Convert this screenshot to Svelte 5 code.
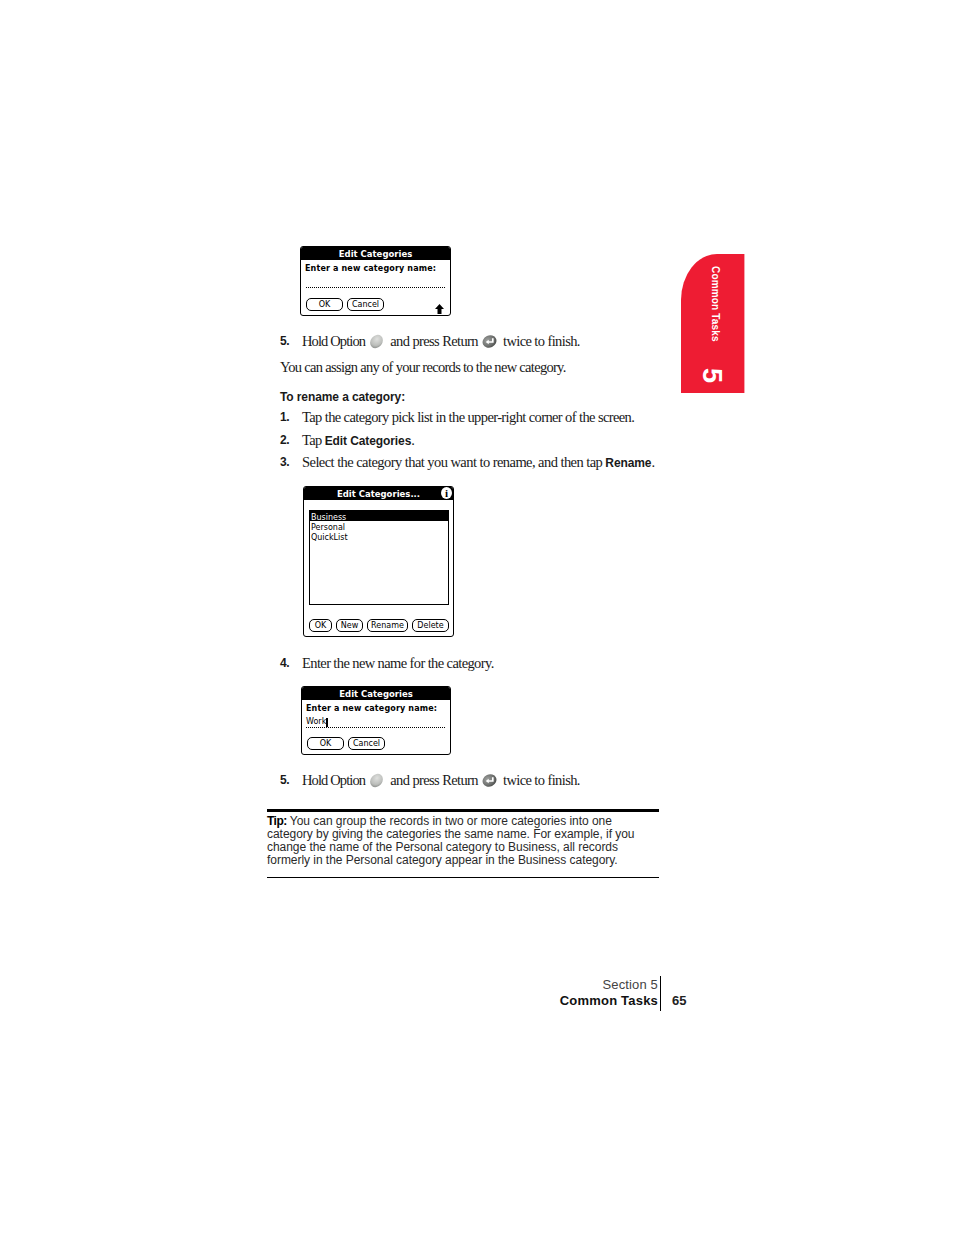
<script>
  const optionIcon = "option";
  const returnIcon = "return";
</script>

{#snippet hardKey(kind)}
  <svg class="key" viewBox="0 0 16 16" aria-hidden="true">
    <defs>
      <radialGradient id="{kind}-fill" cx="0.4" cy="0.35" r="0.8">
        {#if kind === optionIcon}
          <stop offset="0" stop-color="#dfe0de" />
          <stop offset="0.6" stop-color="#bcbebb" />
          <stop offset="1" stop-color="#777a77" />
        {:else}
          <stop offset="0" stop-color="#a0a2a0" />
          <stop offset="0.6" stop-color="#6c6e6c" />
          <stop offset="1" stop-color="#343634" />
        {/if}
      </radialGradient>
    </defs>
    {#if kind === optionIcon}
      <ellipse cx="8" cy="8" rx="6.2" ry="7.6" transform="rotate(40 8 8)" fill="url(#{kind}-fill)" />
    {:else}
      <ellipse cx="8" cy="8" rx="7.6" ry="6.4" transform="rotate(-25 8 8)" fill="url(#{kind}-fill)" />
      <path d="M11.5 4.5v4h-5" fill="none" stroke="#fff" stroke-width="1.8" />
      <path d="M7.2 6L4 8.6l3.2 2.4z" fill="#fff" />
    {/if}
  </svg>
{/snippet}

{#snippet finishStep()}
  <div class="step">
    <b class="num">5.</b>
    <span><span class="hold">Hold Option</span> <span class="gap-l">{@render hardKey(optionIcon)}</span> and press Return <span class="gap-l">{@render hardKey(returnIcon)}</span> twice to finish.</span>
  </div>
{/snippet}

<div class="page">
  <div class="sheet">
    <main class="column">
      <section class="palm first">
        <header class="bar">Edit Categories</header>
        <div class="prompt">Enter a new category name:</div>
        <div class="entry"></div>
        <div class="actions">
          <span class="btn ok">OK</span>
          <span class="btn cancel">Cancel</span>
          <svg class="up" viewBox="0 0 9 10" aria-hidden="true"><path d="M4.5 0L9 5H6.5v5h-4V5H0z" fill="#000" /></svg>
        </div>
      </section>

      <div class="mt15">{@render finishStep()}</div>
      <p class="body mt6">You can assign any of your records to the new category.</p>

      <h2 class="heading">To rename a category:</h2>
      <div class="step mt2"><b class="num">1.</b><span>Tap the category pick list in the upper-right corner of the screen.</span></div>
      <div class="step mt3"><b class="num">2.</b><span>Tap <b class="strong">Edit Categories</b>.</span></div>
      <div class="step mt2 loose"><b class="num">3.</b><span>Select the category that you want to rename, and then tap <b class="strong">Rename</b>.</span></div>

      <section class="palm second">
        <header class="bar">Edit Categories...
          <span class="info">i</span>
        </header>
        <div class="list">
          <div class="item active">Business</div>
          <div class="item">Personal</div>
          <div class="item">QuickList</div>
        </div>
        <div class="actions tight">
          <span class="btn b-ok">OK</span>
          <span class="btn b-new">New</span>
          <span class="btn b-rename">Rename</span>
          <span class="btn b-delete">Delete</span>
        </div>
      </section>

      <div class="step mt16"><b class="num">4.</b><span>Enter the new name for the category.</span></div>

      <section class="palm third">
        <header class="bar">Edit Categories</header>
        <div class="prompt">Enter a new category name:</div>
        <div class="entry filled"><span class="typed">Work</span><i class="caret"></i></div>
        <div class="actions">
          <span class="btn ok">OK</span>
          <span class="btn cancel">Cancel</span>
        </div>
      </section>

      <div class="mt15">{@render finishStep()}</div>

      <aside class="tip">
        <b>Tip:</b> You can group the records in two or more categories into one<br />
        category by giving the categories the same name. For example, if you<br />
        change the name of the Personal category to Business, all records<br />
        formerly in the Personal category appear in the Business category.
      </aside>
    </main>

    <div class="tab">
      <span class="tab-title">Common Tasks</span>
      <span class="tab-num">5</span>
    </div>
  </div>

  <footer class="foot">
    <div class="foot-label">
      <div class="section">Section 5</div>
      <div class="chapter">Common Tasks</div>
    </div>
    <div class="folio">65</div>
  </footer>
</div>

<style>
  :global(body) {
    margin: 0;
    background: #fff;
    color: #1a1a1a;
  }

  .page {
    width: 954px;
    height: 1235px;
    padding-top: 246px;
    box-sizing: border-box;
    overflow: hidden;
  }

  .sheet {
    display: flex;
    align-items: flex-start;
    padding-left: 267px;
  }

  .column {
    width: 392px;
    flex: none;
  }

  .mt2 { margin-top: 2px; }
  .mt3 { margin-top: 3px; }
  .mt6 { margin-top: 6px; }
  .mt15 { margin-top: 15px; }
  .mt16 { margin-top: 16px; }

  .step,
  .body {
    height: 20px;
    font-family: "Liberation Serif", serif;
    font-size: 14.5px;
    line-height: 20px;
    letter-spacing: -0.61px;
    margin-left: 13px;
    white-space: nowrap;
  }

  .body {
    margin-bottom: 0;
    letter-spacing: -0.7px;
  }

  .step {
    display: flex;
  }

  .loose {
    letter-spacing: -0.56px;
  }

  .hold {
    letter-spacing: -0.88px;
  }

  .num {
    width: 22px;
    flex: none;
    font-family: "Liberation Sans", sans-serif;
    font-size: 12px;
    letter-spacing: -0.4px;
    font-weight: 700;
  }

  .strong {
    font-family: "Liberation Sans", sans-serif;
    font-size: 12px;
    letter-spacing: -0.1px;
    font-weight: 700;
  }

  .gap-l {
    display: inline-block;
    width: 15px;
    margin: 0 3px 0 1px;
    vertical-align: -3px;
    line-height: 0;
  }

  .key {
    width: 15px;
    height: 15px;
  }

  .heading {
    margin: 12px 0 0 13px;
    font-family: "Liberation Sans", sans-serif;
    font-size: 12px;
    line-height: 16px;
    letter-spacing: -0.1px;
    font-weight: 700;
  }

  /* handheld screenshots */
  .palm {
    position: relative;
    box-sizing: border-box;
    width: 151px;
    border: 1px solid #000;
    border-radius: 3px;
    font-family: "DejaVu Sans", sans-serif;
    font-size: 8px;
    color: #000;
    background: #fff;
    overflow: hidden;
  }

  .first {
    height: 70px;
    margin-left: 33px;
  }

  .second {
    height: 151px;
    margin: 14px 0 0 36px;
  }

  .third {
    width: 150px;
    height: 69px;
    margin: 13px 0 0 34px;
  }

  .bar {
    height: 13px;
    background: #000;
    color: #fff;
    font-weight: 700;
    font-size: 8.5px;
    line-height: 14px;
    text-align: center;
  }

  .info {
    position: absolute;
    top: 0;
    right: 1px;
    width: 11px;
    height: 12px;
    border-radius: 50%;
    background: #fff;
    color: #000;
    font-size: 11px;
    font-weight: 700;
    line-height: 12px;
    font-family: "Liberation Serif", serif;
    text-align: center;
  }

  .prompt {
    margin: 3px 0 0 4px;
    height: 11px;
    line-height: 11px;
    font-weight: 700;
    white-space: nowrap;
    letter-spacing: 0.15px;
  }

  .entry {
    height: 13px;
    margin: 0 5px;
    border-bottom: 1px dotted #000;
  }

  .entry.filled {
    height: 11px;
    margin: 2px 5px 0 4px;
    display: flex;
    align-items: flex-end;
    font-size: 8px;
    line-height: 10px;
  }

  .caret {
    width: 2px;
    height: 9px;
    background: #000;
  }

  .actions {
    display: flex;
    gap: 4px;
    margin: 10px 0 0 5px;
    align-items: flex-start;
    position: relative;
  }

  .third .actions {
    margin-top: 9px;
  }

  .btn {
    box-sizing: border-box;
    height: 13px;
    border: 1px solid #000;
    border-radius: 5px;
    font-size: 8px;
    line-height: 12px;
    text-align: center;
  }

  .ok,
  .cancel {
    width: 37px;
  }

  .up {
    position: absolute;
    left: 129px;
    top: 6px;
    width: 9px;
    height: 10px;
  }

  .list {
    box-sizing: border-box;
    height: 95px;
    margin: 10px 4px 0 5px;
    border: 1px solid #000;
  }

  .item {
    height: 10px;
    line-height: 13px;
    padding-left: 1px;
  }

  .item.active {
    background: #000;
    color: #fff;
  }

  .tight {
    margin: 14px 0 0 5px;
    gap: 4px;
  }

  .b-ok { width: 23px; }
  .b-new { width: 27px; }
  .b-rename { width: 41px; }
  .b-delete { width: 37px; }

  .tip {
    margin-top: 19px;
    padding: 3px 0 10px;
    border-top: 3px solid #000;
    border-bottom: 1px solid #000;
    font-family: "Liberation Sans", sans-serif;
    font-size: 12px;
    line-height: 13px;
    letter-spacing: -0.04px;
    color: #2a2a2a;
    white-space: nowrap;
  }

  .tip b {
    color: #000;
    letter-spacing: -0.5px;
  }

  .tab {
    flex: none;
    box-sizing: border-box;
    width: 64px;
    height: 139px;
    margin: 8px 0 0 22px;
    padding: 12px 0 10px;
    display: flex;
    flex-direction: column;
    align-items: center;
    justify-content: space-between;
    background: #ee1c33;
    border-right: 1px solid #f7a3ad;
    border-top-left-radius: 36px 46px;
    color: #fff;
    font-family: "Liberation Sans", sans-serif;
    font-weight: 700;
  }

  .tab-title,
  .tab-num {
    writing-mode: vertical-rl;
    white-space: nowrap;
  }

  .tab-title {
    margin-left: 4px;
    font-size: 10px;
    line-height: 12px;
    letter-spacing: 0.17px;
  }

  .tab-num {
    font-size: 27px;
    line-height: 27px;
    margin-right: 2px;
  }

  .foot {
    display: flex;
    justify-content: flex-end;
    width: 687px;
    margin-top: 98px;
    font-family: "Liberation Sans", sans-serif;
    font-size: 13px;
  }

  .foot-label {
    padding: 1px 2px 2px 0;
    border-right: 1px solid #000;
    text-align: right;
  }

  .section {
    height: 16px;
    line-height: 16px;
    color: #444;
    font-size: 13px;
    letter-spacing: 0.15px;
  }

  .chapter {
    line-height: 16px;
    font-weight: 700;
    letter-spacing: 0.2px;
    color: #111;
  }

  .folio {
    width: 26px;
    box-sizing: border-box;
    padding-left: 11px;
    margin-top: 17px;
    line-height: 16px;
    font-weight: 700;
    color: #222;
  }
</style>
